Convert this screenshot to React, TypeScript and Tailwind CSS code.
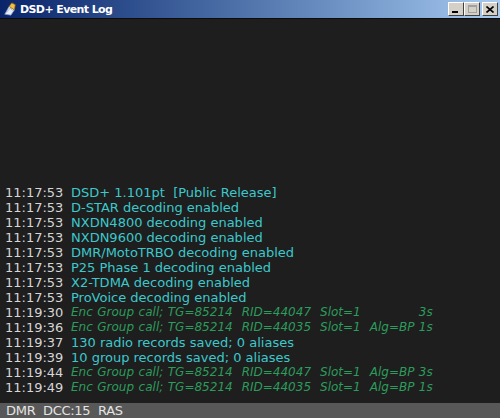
import React from 'react'

type Line =
  | { time: string; kind: 'info'; text: string }
  | { time: string; kind: 'enc'; rid: string; alg?: string; dur: string }

const LINES: Line[] = [
  { time: '11:17:53', kind: 'info', text: 'DSD+ 1.101pt  [Public Release]' },
  { time: '11:17:53', kind: 'info', text: 'D-STAR decoding enabled' },
  { time: '11:17:53', kind: 'info', text: 'NXDN4800 decoding enabled' },
  { time: '11:17:53', kind: 'info', text: 'NXDN9600 decoding enabled' },
  { time: '11:17:53', kind: 'info', text: 'DMR/MotoTRBO decoding enabled' },
  { time: '11:17:53', kind: 'info', text: 'P25 Phase 1 decoding enabled' },
  { time: '11:17:53', kind: 'info', text: 'X2-TDMA decoding enabled' },
  { time: '11:17:53', kind: 'info', text: 'ProVoice decoding enabled' },
  { time: '11:19:30', kind: 'enc', rid: '44047', dur: '3s' },
  { time: '11:19:36', kind: 'enc', rid: '44035', alg: 'Alg=BP', dur: '1s' },
  { time: '11:19:37', kind: 'info', text: '130 radio records saved; 0 aliases' },
  { time: '11:19:39', kind: 'info', text: '10 group records saved; 0 aliases' },
  { time: '11:19:44', kind: 'enc', rid: '44047', alg: 'Alg=BP', dur: '3s' },
  { time: '11:19:49', kind: 'enc', rid: '44035', alg: 'Alg=BP', dur: '1s' },
]

function TitleButton({ children }: { children: React.ReactNode }) {
  return (
    <div className="w-[16px] h-[14px] bg-[#d4d0c8] border border-t-white border-l-white border-b-[#404040] border-r-[#404040] flex items-center justify-center">
      {children}
    </div>
  )
}

export default function App() {
  return (
    <div className="w-[500px] h-[418px] flex flex-col bg-[#1e1e1e] overflow-hidden font-['DejaVu_Sans',sans-serif]">
      {/* Title bar */}
      <div className="h-[19px] flex items-center bg-gradient-to-r from-[#0a246a] to-[#a6caf0] border-b border-[#0c0c0c] pl-[3px] pr-[2px]">
        <svg width="14" height="14" viewBox="0 0 16 16" className="shrink-0">
          <path d="M2 14 L7 5 L13 9 L9 15 Z" fill="#e8eef8" stroke="#7890b8" strokeWidth="0.8" />
          <path d="M7 5 L10 1 L14 3 L13 9 Z" fill="#f0c040" stroke="#a07010" strokeWidth="0.8" />
          <path d="M4 12 L8 7 L11 10" fill="none" stroke="#90a8d0" strokeWidth="0.8" />
        </svg>
        <span className="ml-[3px] text-white font-bold text-[11px] tracking-[-0.6px] leading-none">DSD+ Event Log</span>
        <div className="ml-auto flex items-center">
          <TitleButton>
            <div className="w-[6px] h-[2px] bg-black mt-[6px] ml-[-2px]" />
          </TitleButton>
          <TitleButton>
            <div className="w-[9px] h-[8px] border border-[#a0a0a0] border-t-2" />
          </TitleButton>
          <div className="w-[2px]" />
          <TitleButton>
            <svg width="8" height="7" viewBox="0 0 8 7">
              <path d="M0.5 0.5 L7.5 6.5 M7.5 0.5 L0.5 6.5" stroke="black" strokeWidth="1.6" />
            </svg>
          </TitleButton>
        </div>
      </div>

      {/* Log */}
      <div className="flex-1 flex flex-col justify-end pl-[5px] pb-[8px] text-[13px] leading-[15px]">
        {LINES.map((l, i) => (
          <div key={i} className="flex whitespace-pre">
            <span className="text-[#d6d6d6] w-[66px] shrink-0">{l.time}</span>
            {l.kind === 'info' ? (
              <span className="text-[#3cc8cc]">{l.text}</span>
            ) : (
              <span className="text-[#2c9c5c] italic text-[12px] [word-spacing:0.7px]">
                {`Enc Group call; TG=85214  RID=${l.rid}  Slot=1  `}
                <span className="inline-block w-[49px]">{l.alg ?? ''}</span>
                {l.dur}
              </span>
            )}
          </div>
        ))}
      </div>

      {/* Status bar */}
      <div className="h-[15px] bg-[#585858] text-[#e4e4e4] text-[13px] leading-[15px] tracking-[-0.3px] pl-[6px] whitespace-pre">
        DMR  DCC:15  RAS
      </div>
    </div>
  )
}
